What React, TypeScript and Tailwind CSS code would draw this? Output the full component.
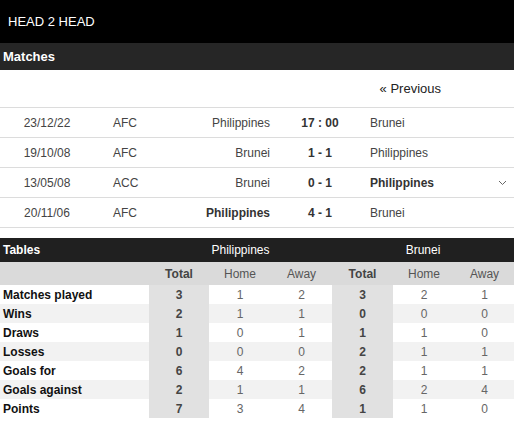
const matches = [
  { date: "23/12/22", comp: "AFC", home: "Philippines", score: "17 : 00", away: "Brunei", win: "" },
  { date: "19/10/08", comp: "AFC", home: "Brunei", score: "1 - 1", away: "Philippines", win: "" },
  { date: "13/05/08", comp: "ACC", home: "Brunei", score: "0 - 1", away: "Philippines", win: "away", more: true },
  { date: "20/11/06", comp: "AFC", home: "Philippines", score: "4 - 1", away: "Brunei", win: "home" },
];

const stats: [string, number[]][] = [
  ["Matches played", [3, 1, 2, 3, 2, 1]],
  ["Wins", [2, 1, 1, 0, 0, 0]],
  ["Draws", [1, 0, 1, 1, 1, 0]],
  ["Losses", [0, 0, 0, 2, 1, 1]],
  ["Goals for", [6, 4, 2, 2, 1, 1]],
  ["Goals against", [2, 1, 1, 6, 2, 4]],
  ["Points", [7, 3, 4, 1, 1, 0]],
];

const cols = "grid grid-cols-[149px_60px_62px_61px_61px_62px_59px]";

export default function App() {
  return (
    <div className="w-[514px] h-[424px] bg-white overflow-hidden font-['Liberation_Sans',Arial,sans-serif]">
      {/* Title */}
      <div className="h-[43px] bg-black flex items-center pl-2 text-[13px] text-white">HEAD 2 HEAD</div>

      {/* Matches */}
      <div className="h-[27px] bg-[#262626] flex items-center pl-[3px] text-[13px] font-bold text-white">Matches</div>
      <div className="h-[37px] flex items-center justify-end pr-[73px] text-[13px] text-[#222]">« Previous</div>
      <div className="border-t border-[#dcdcdc]">
        {matches.map((m, i) => (
          <div key={i} className="h-[30px] flex items-center border-b border-[#dcdcdc] text-[12px] text-[#444]">
            <div className="w-[94px] text-center">{m.date}</div>
            <div className="w-[60px] pl-[19px]">{m.comp}</div>
            <div className={`w-[116px] text-right ${m.win === "home" ? "font-bold text-[#333]" : ""}`}>{m.home}</div>
            <div className="w-[100px] text-center font-bold text-[#333]">{m.score}</div>
            <div className={`flex-1 ${m.win === "away" ? "font-bold text-[#333]" : ""}`}>{m.away}</div>
            <div className="w-[24px] flex justify-center">
              {m.more && (
                <svg width="9" height="6" viewBox="0 0 9 6">
                  <polyline points="1,1 4.5,4.5 8,1" fill="none" stroke="#666" strokeWidth="1" />
                </svg>
              )}
            </div>
          </div>
        ))}
      </div>

      {/* Tables */}
      <div className="mt-[10px]">
        <div className={`${cols} h-[24px] bg-[#202020] items-center text-[12px] text-white`}>
          <div className="pl-[3px] font-bold">Tables</div>
          <div className="col-span-3 text-center">Philippines</div>
          <div className="col-span-3 text-center">Brunei</div>
        </div>
        <div className={`${cols} h-[23px] bg-[#dadada] items-center text-[12px] text-[#555]`}>
          <div />
          <div className="text-center font-bold text-[#444]">Total</div>
          <div className="text-center">Home</div>
          <div className="text-center">Away</div>
          <div className="text-center font-bold text-[#444]">Total</div>
          <div className="text-center">Home</div>
          <div className="text-center">Away</div>
        </div>
        {stats.map(([label, v], i) => (
          <div key={label} className={`${cols} h-[19px] text-[12px] ${i % 2 ? "bg-[#f2f2f2]" : "bg-white"}`}>
            <div className="pl-[3px] font-bold text-[#111] flex items-center">{label}</div>
            {v.map((n, j) => (
              <div
                key={j}
                className={`flex items-center justify-center ${j % 3 === 0 ? "bg-[#e1e1e1] font-bold text-[#444]" : "text-[#666]"}`}
              >
                {n}
              </div>
            ))}
          </div>
        ))}
      </div>
    </div>
  );
}
